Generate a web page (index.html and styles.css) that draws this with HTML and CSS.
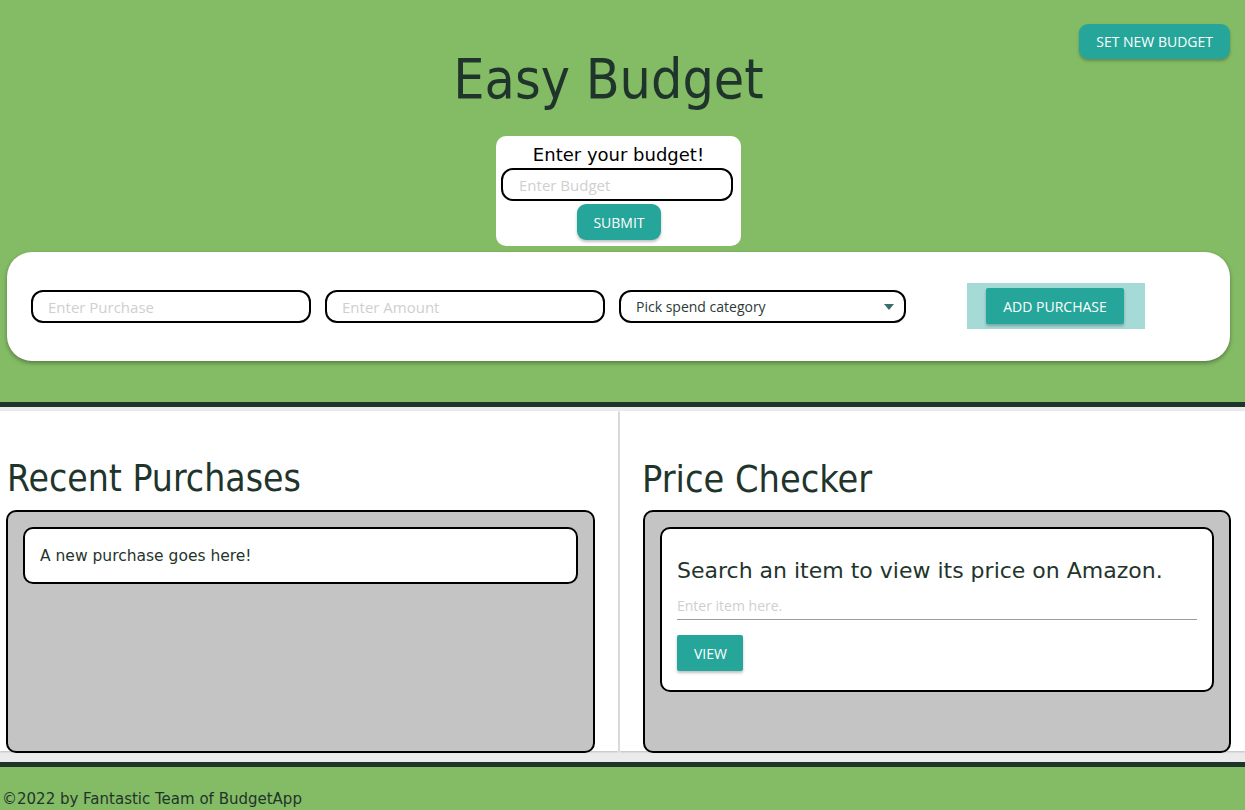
FILE: index.html
```html
<!DOCTYPE html>
<html>
<head>
<meta charset="utf-8">
<link rel="stylesheet" href="styles.css">
</head>
<body>
<header class="top">
  <div class="top-bar">
    <button class="btn btn-round">Set new budget</button>
  </div>
  <h1 class="title">Easy Budget</h1>
  <div class="budget-card">
    <label class="budget-label">Enter your budget!</label>
    <input class="field budget-input" type="text" placeholder="Enter Budget">
    <button class="btn btn-round btn-submit">Submit</button>
  </div>
  <div class="purchase-card">
    <input class="field purchase-input" type="text" placeholder="Enter Purchase">
    <input class="field purchase-input" type="text" placeholder="Enter Amount">
    <div class="field select">
      <span>Pick spend category</span>
      <svg class="caret" width="10" height="6" viewBox="0 0 10 6"><path d="M0 0H10L5 6Z" fill="#3a6e6e"/></svg>
    </div>
    <div class="add-wrap">
      <button class="btn btn-add">Add purchase</button>
    </div>
  </div>
</header>
<main class="main">
  <section class="panel panel-left">
    <h2 class="panel-title">Recent Purchases</h2>
    <div class="tray">
      <div class="item-card">A new purchase goes here!</div>
    </div>
  </section>
  <section class="panel panel-right">
    <h2 class="panel-title title-right">Price Checker</h2>
    <div class="tray">
      <div class="item-card checker">
        <p class="checker-text">Search an item to view its price on Amazon.</p>
        <input class="line-input" type="text" placeholder="Enter item here.">
        <button class="btn btn-view">View</button>
      </div>
    </div>
  </section>
</main>
<footer class="foot">©2022 by Fantastic Team of BudgetApp</footer>
</body>
</html>
```

FILE: styles.css
```css
* { box-sizing: border-box; }
html, body { margin: 0; padding: 0; }
body {
  font-family: "DejaVu Sans Condensed", "DejaVu Sans", sans-serif;
  color: #1f352c;
  background: #ebebeb;
  width: 1245px;
  height: 810px;
  overflow: hidden;
}
.top {
  background: #84bb65;
  height: 407px;
  border-bottom: 5px solid #1f352c;
  padding: 24px 7px 0 7px;
  display: flex;
  flex-direction: column;
  align-items: center;
}
.top-bar {
  width: 100%;
  height: 0;
  display: flex;
  justify-content: flex-end;
  padding-right: 8px;
}
.btn {
  font-family: "Open Sans", "Noto Sans", sans-serif;
  text-transform: uppercase;
  color: #fff;
  background: #26a69a;
  border: none;
  font-size: 14px;
  letter-spacing: 0;
  box-shadow: 0 2px 3px rgba(0,0,0,0.25);
  cursor: pointer;
  padding: 0 16px;
}
.btn-round {
  height: 35px;
  border-radius: 9px;
  flex: none;
  padding: 0 17px;
}
.title {
  font-weight: normal;
  font-size: 55px;
  margin: 25px 0 0 0;
  line-height: 60px;
  height: 61px;
  padding-right: 28px;
}
.budget-card {
  margin-top: 26px;
  width: 245px;
  height: 110px;
  background: #fff;
  border-radius: 10px;
  display: flex;
  flex-direction: column;
  align-items: center;
  padding: 8px 5px 0 5px;
  margin-right: 8px;
}
.budget-label {
  font-family: "DejaVu Sans", sans-serif;
  font-size: 18px;
  color: #000;
  line-height: 21px;
  margin-bottom: 3px;
  margin-left: 0;
}
.field {
  border: 2px solid #000;
  border-radius: 12px;
  background: #fff;
  font-family: "Open Sans", "Noto Sans", sans-serif;
  font-size: 15px;
  outline: none;
}
.field::placeholder { color: #cfcfcf; }
.budget-input {
  width: 232px;
  height: 33px;
  padding: 0 16px;
  margin-right: 3px;
}
.btn-submit {
  margin-top: 3px;
  height: 36px;
  padding: 0 16px;
  margin-left: 1px;
}
.purchase-card {
  margin-top: 6px;
  align-self: stretch;
  margin-right: 8px;
  height: 109px;
  background: #fff;
  border-radius: 25px;
  box-shadow: 0 2px 4px rgba(0,0,0,0.35);
  display: flex;
  align-items: center;
  padding: 0 24px;
  gap: 14px;
}
.purchase-input {
  width: 280px;
  height: 33px;
  padding: 0 15px;
}
.select {
  width: 287px;
  height: 33px;
  display: flex;
  align-items: center;
  justify-content: space-between;
  padding: 0 10px 0 15px;
  font-size: 14px;
  color: #2b3a37;
}
.caret { margin-top: 1px; }
.add-wrap {
  margin-left: 47px;
  margin-top: -1px;
  width: 178px;
  height: 46px;
  background: #a5dad6;
  display: flex;
  align-items: center;
  justify-content: center;
  padding-right: 2px;
}
.btn-add {
  height: 36px;
  border-radius: 2px;
  padding: 0 16px;
  width: 138px;
}
.main {
  display: flex;
  gap: 2px;
  padding-top: 4px;
  height: 355px;
}
.panel {
  background: #fff;
  height: 340px;
  box-shadow: 0 1px 2px rgba(0,0,0,0.2);
}
.panel-left { width: 618px; padding: 0 23px 0 6px; }
.panel-right { flex: 1; padding: 0 14px 0 23px; }
.panel-title {
  font-weight: normal;
  font-size: 37px;
  margin: 48px 0 0 1px;
  line-height: 40px;
  height: 51px;
}
.title-right { margin-left: -1px; font-size: 37.5px; }
.tray {
  background: #c4c4c4;
  border: 2px solid #000;
  border-radius: 10px;
  height: 243px;
  padding: 15px 15px;
}
.item-card {
  background: #fff;
  border: 2px solid #000;
  border-radius: 10px;
  height: 57px;
  padding: 0 15px;
  display: flex;
  align-items: center;
  font-family: "DejaVu Sans", sans-serif;
  font-size: 15.5px;
  color: #1f352c;
}
.checker {
  height: 165px;
  display: block;
  padding: 27px 15px 0 15px;
}
.checker-text {
  margin: 0;
  font-size: 22px;
  line-height: 30px;
}
.line-input {
  display: block;
  width: 100%;
  border: none;
  border-bottom: 1px solid #9e9e9e;
  font-family: "Open Sans", "Noto Sans", sans-serif;
  font-size: 14px;
  height: 28px;
  padding: 0;
  margin-top: 6px;
  outline: none;
}
.line-input::placeholder { color: #cfcfcf; }
.btn-view {
  margin-top: 15px;
  height: 36px;
  border-radius: 2px;
  padding: 0 16px 0 17px;
}
.foot {
  border-top: 5px solid #1f352c;
  background: #84bb65;
  height: 48px;
  padding: 22px 0 0 2px;
  font-family: "DejaVu Sans", sans-serif;
  font-size: 15px;
  color: #1f352c;
  line-height: 20px;
}
```
